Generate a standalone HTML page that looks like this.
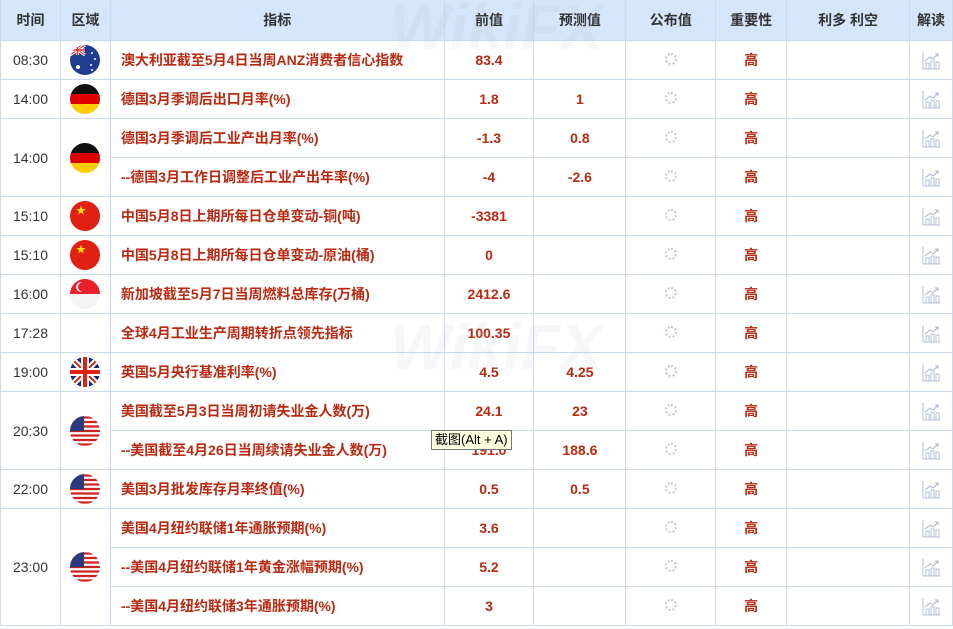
<!DOCTYPE html><html><head><meta charset="utf-8"><style>
body{margin:0;background:#fff;width:953px;height:629px;overflow:hidden;font-family:"Liberation Sans","Noto Sans CJK SC",sans-serif;position:relative}
table{border-collapse:collapse;table-layout:fixed;position:absolute;left:0;top:0}
td,th{border:1px solid #c9d9ee;padding:0;text-align:center;font-size:14px}
th{height:40px;background:#d5e5fb;color:#333;font-weight:bold;font-size:14px}
td{height:38px;color:#333}
tr.h th{border-top:none}
.r{color:#b92a12;font-weight:bold}
.n{text-align:left;padding-left:10px}
.f{width:30px;height:30px;border-radius:50%;overflow:hidden;margin:0 auto;display:block}
.sp{display:inline-block;width:12px;height:12px;border-radius:50%;border:2px dotted #b8c8e4;box-sizing:border-box}
.tip{position:absolute;left:431px;top:430px;background:#ffffe1;border:1px solid #777;font-size:13px;padding:1px 3px;color:#000;line-height:16px}
.wm{position:absolute;color:rgba(180,180,200,.10);font-weight:bold;font-size:64px;font-style:italic}
.ic{display:block;margin:0 auto}
</style></head><body>
<svg width="0" height="0" style="position:absolute"><defs><g id="c"><path d="M2 2V19H19" stroke="#b5bfd8" fill="none" stroke-width="1"/><rect x="5" y="13" width="3" height="6" fill="none" stroke="#b5bfd8"/><rect x="10" y="11" width="3" height="8" fill="none" stroke="#b5bfd8"/><rect x="15" y="12" width="3" height="7" fill="none" stroke="#b5bfd8"/><path d="M4 11L9 7L12 9L17 4M14 4H17V7" stroke="#a8b4d0" fill="none"/></g></defs></svg>
<table>
<colgroup><col style="width:60px"><col style="width:50px"><col style="width:334px"><col style="width:90px"><col style="width:92px"><col style="width:90px"><col style="width:71px"><col style="width:123px"><col style="width:43px"></colgroup>
<tr class="h"><th>时间</th><th>区域</th><th>指标</th><th>前值</th><th>预测值</th><th>公布值</th><th>重要性</th><th>利多 利空</th><th>解读</th></tr>
<tr><td>08:30</td><td><svg class="f" viewBox="0 0 30 30"><rect width="30" height="30" fill="#1f3d8f"/><path d="M0 0L15 10M15 0L0 10" stroke="#fff" stroke-width="3"/><path d="M0 0L15 10M15 0L0 10" stroke="#d22" stroke-width="1"/><path d="M7.5 0V10M0 5H15" stroke="#fff" stroke-width="3"/><path d="M7.5 0V10M0 5H15" stroke="#d22" stroke-width="1.5"/><circle cx="8" cy="22" r="2" fill="#fff"/><circle cx="22" cy="8" r="1" fill="#fff"/><circle cx="25" cy="14" r="1" fill="#fff"/><circle cx="21" cy="20" r="1" fill="#fff"/><circle cx="22" cy="25" r="1" fill="#fff"/></svg></td><td class="n r">澳大利亚截至5月4日当周ANZ消费者信心指数</td><td class="r">83.4</td><td class="r"></td><td><span class="sp"></span></td><td class="r">高</td><td></td><td><svg class="ic" width="20" height="20"><use href="#c"/></svg></td></tr>
<tr><td>14:00</td><td><svg class="f" viewBox="0 0 30 30"><rect width="30" height="10" fill="#111"/><rect y="10" width="30" height="10" fill="#d00"/><rect y="20" width="30" height="10" fill="#fc0"/></svg></td><td class="n r">德国3月季调后出口月率(%)</td><td class="r">1.8</td><td class="r">1</td><td><span class="sp"></span></td><td class="r">高</td><td></td><td><svg class="ic" width="20" height="20"><use href="#c"/></svg></td></tr>
<tr><td rowspan="2">14:00</td><td rowspan="2"><svg class="f" viewBox="0 0 30 30"><rect width="30" height="10" fill="#111"/><rect y="10" width="30" height="10" fill="#d00"/><rect y="20" width="30" height="10" fill="#fc0"/></svg></td><td class="n r">德国3月季调后工业产出月率(%)</td><td class="r">-1.3</td><td class="r">0.8</td><td><span class="sp"></span></td><td class="r">高</td><td></td><td><svg class="ic" width="20" height="20"><use href="#c"/></svg></td></tr>
<tr><td class="n r">--德国3月工作日调整后工业产出年率(%)</td><td class="r">-4</td><td class="r">-2.6</td><td><span class="sp"></span></td><td class="r">高</td><td></td><td><svg class="ic" width="20" height="20"><use href="#c"/></svg></td></tr>
<tr><td>15:10</td><td><svg class="f" viewBox="0 0 30 30"><rect width="30" height="30" fill="#e02010"/><text x="6" y="13" fill="#fd0" font-size="10">★</text></svg></td><td class="n r">中国5月8日上期所每日仓单变动-铜(吨)</td><td class="r">-3381</td><td></td><td><span class="sp"></span></td><td class="r">高</td><td></td><td><svg class="ic" width="20" height="20"><use href="#c"/></svg></td></tr>
<tr><td>15:10</td><td><svg class="f" viewBox="0 0 30 30"><rect width="30" height="30" fill="#e02010"/><text x="6" y="13" fill="#fd0" font-size="10">★</text></svg></td><td class="n r">中国5月8日上期所每日仓单变动-原油(桶)</td><td class="r">0</td><td></td><td><span class="sp"></span></td><td class="r">高</td><td></td><td><svg class="ic" width="20" height="20"><use href="#c"/></svg></td></tr>
<tr><td>16:00</td><td><svg class="f" viewBox="0 0 30 30"><rect width="30" height="30" fill="#f4f4f4"/><rect width="30" height="15" fill="#e8202a"/><circle cx="11" cy="8" r="5" fill="#fff"/><circle cx="13" cy="8" r="5" fill="#e8202a"/></svg></td><td class="n r">新加坡截至5月7日当周燃料总库存(万桶)</td><td class="r">2412.6</td><td></td><td><span class="sp"></span></td><td class="r">高</td><td></td><td><svg class="ic" width="20" height="20"><use href="#c"/></svg></td></tr>
<tr><td>17:28</td><td></td><td class="n r">全球4月工业生产周期转折点领先指标</td><td class="r">100.35</td><td></td><td><span class="sp"></span></td><td class="r">高</td><td></td><td><svg class="ic" width="20" height="20"><use href="#c"/></svg></td></tr>
<tr><td>19:00</td><td><svg class="f" viewBox="0 0 30 30"><rect width="30" height="30" fill="#1a2a6c"/><path d="M0 0L30 30M30 0L0 30" stroke="#fff" stroke-width="6"/><path d="M0 0L30 30M30 0L0 30" stroke="#d21" stroke-width="2"/><path d="M15 0V30M0 15H30" stroke="#fff" stroke-width="8"/><path d="M15 0V30M0 15H30" stroke="#d21" stroke-width="4"/></svg></td><td class="n r">英国5月央行基准利率(%)</td><td class="r">4.5</td><td class="r">4.25</td><td><span class="sp"></span></td><td class="r">高</td><td></td><td><svg class="ic" width="20" height="20"><use href="#c"/></svg></td></tr>
<tr><td rowspan="2">20:30</td><td rowspan="2"><svg class="f" viewBox="0 0 30 30"><rect width="30" height="30" fill="#fff"/><path d="M0 1.5H30M0 6H30M0 10.5H30M0 15H30M0 19.5H30M0 24H30M0 28.5H30" stroke="#c22" stroke-width="2.3"/><rect width="14" height="15" fill="#2a3a7c"/></svg></td><td class="n r">美国截至5月3日当周初请失业金人数(万)</td><td class="r">24.1</td><td class="r">23</td><td><span class="sp"></span></td><td class="r">高</td><td></td><td><svg class="ic" width="20" height="20"><use href="#c"/></svg></td></tr>
<tr><td class="n r">--美国截至4月26日当周续请失业金人数(万)</td><td class="r">191.0</td><td class="r">188.6</td><td><span class="sp"></span></td><td class="r">高</td><td></td><td><svg class="ic" width="20" height="20"><use href="#c"/></svg></td></tr>
<tr><td>22:00</td><td><svg class="f" viewBox="0 0 30 30"><rect width="30" height="30" fill="#fff"/><path d="M0 1.5H30M0 6H30M0 10.5H30M0 15H30M0 19.5H30M0 24H30M0 28.5H30" stroke="#c22" stroke-width="2.3"/><rect width="14" height="15" fill="#2a3a7c"/></svg></td><td class="n r">美国3月批发库存月率终值(%)</td><td class="r">0.5</td><td class="r">0.5</td><td><span class="sp"></span></td><td class="r">高</td><td></td><td><svg class="ic" width="20" height="20"><use href="#c"/></svg></td></tr>
<tr><td rowspan="3">23:00</td><td rowspan="3"><svg class="f" viewBox="0 0 30 30"><rect width="30" height="30" fill="#fff"/><path d="M0 1.5H30M0 6H30M0 10.5H30M0 15H30M0 19.5H30M0 24H30M0 28.5H30" stroke="#c22" stroke-width="2.3"/><rect width="14" height="15" fill="#2a3a7c"/></svg></td><td class="n r">美国4月纽约联储1年通胀预期(%)</td><td class="r">3.6</td><td></td><td><span class="sp"></span></td><td class="r">高</td><td></td><td><svg class="ic" width="20" height="20"><use href="#c"/></svg></td></tr>
<tr><td class="n r">--美国4月纽约联储1年黄金涨幅预期(%)</td><td class="r">5.2</td><td></td><td><span class="sp"></span></td><td class="r">高</td><td></td><td><svg class="ic" width="20" height="20"><use href="#c"/></svg></td></tr>
<tr><td class="n r">--美国4月纽约联储3年通胀预期(%)</td><td class="r">3</td><td></td><td><span class="sp"></span></td><td class="r">高</td><td></td><td><svg class="ic" width="20" height="20"><use href="#c"/></svg></td></tr>
</table>
<div class="wm" style="left:390px;top:-10px">WikiFX</div>
<div class="wm" style="left:390px;top:310px">WikiFX</div>
<div class="tip">截图(Alt + A)</div>
</body></html>
